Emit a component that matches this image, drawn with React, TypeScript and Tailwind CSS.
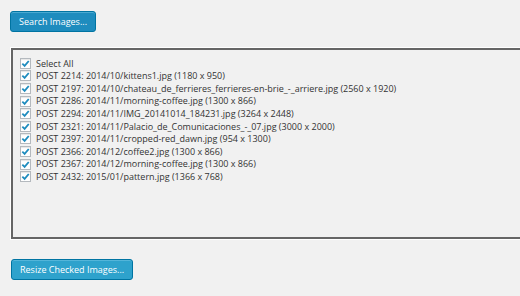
const rows = [
  "POST 2214: 2014/10/kittens1.jpg (1180 x 950)",
  "POST 2197: 2014/10/chateau_de_ferrieres_ferrieres-en-brie_-_arriere.jpg (2560 x 1920)",
  "POST 2286: 2014/11/morning-coffee.jpg (1300 x 866)",
  "POST 2294: 2014/11/IMG_20141014_184231.jpg (3264 x 2448)",
  "POST 2321: 2014/11/Palacio_de_Comunicaciones_-_07.jpg (3000 x 2000)",
  "POST 2397: 2014/11/cropped-red_dawn.jpg (954 x 1300)",
  "POST 2366: 2014/12/coffee2.jpg (1300 x 866)",
  "POST 2367: 2014/12/morning-coffee.jpg (1300 x 866)",
  "POST 2432: 2015/01/pattern.jpg (1366 x 768)",
];

function Check() {
  return (
    <span className="flex h-[11px] w-[11px] shrink-0 items-center justify-center border border-[#b4b9be] bg-white shadow-[inset_0_1px_1px_rgba(0,0,0,0.1)]">
      <svg width="9" height="9" viewBox="0 0 10 10">
        <path d="M1.5 5.2 L4 7.6 L8.6 2.2" fill="none" stroke="#1e8cbe" strokeWidth="2" />
      </svg>
    </span>
  );
}

function Row({ label }: { label: string }) {
  return (
    <label className="flex h-[12.6px] items-center gap-[5px] whitespace-nowrap">
      <Check />
      <span>{label}</span>
    </label>
  );
}

export default function App() {
  return (
    <div className="flex h-[296px] w-[520px] flex-col items-start overflow-hidden bg-[#f1f1f1] font-['Open_Sans',sans-serif] text-[#333]">
      <button className="ml-[10px] mt-[11px] h-[21px] rounded-[3px] border border-[#0074a2] bg-[#1e8cbe] px-[8px] text-[9px] leading-none text-white shadow-[inset_0_1px_0_rgba(120,200,230,0.5)]">
        Search Images...
      </button>
      <div className="ml-[11px] mt-[16px] h-[191px] w-[520px] shrink-0 border-2 border-[#666] bg-[#f1f1f1] pl-[7px] pt-[7px] text-[9px] outline outline-1 outline-white">
        <Row label="Select All" />
        {rows.map((r) => (
          <Row key={r} label={r} />
        ))}
      </div>
      <button className="ml-[11px] mt-[20px] h-[21px] rounded-[3px] border border-[#0074a2] bg-[#2ea2cc] px-[8px] text-[9px] leading-none text-white shadow-[inset_0_1px_0_rgba(120,200,230,0.5)]">
        Resize Checked Images...
      </button>
    </div>
  );
}
